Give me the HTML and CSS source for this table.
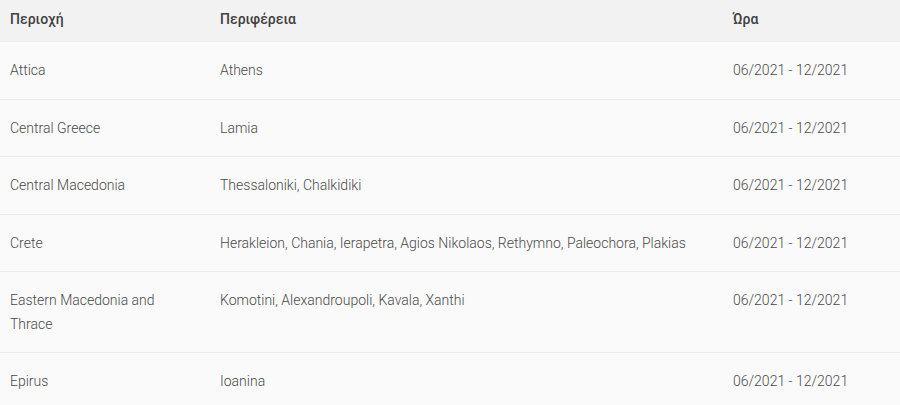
FILE: index.html
```html
<!DOCTYPE html>
<html lang="el">
<head>
<meta charset="utf-8">
<link rel="stylesheet" href="styles.css">
</head>
<body>
<table class="regions">
  <thead>
    <tr><th class="c1">Περιοχή</th><th class="c2">Περιφέρεια</th><th class="c3">Ώρα</th></tr>
  </thead>
  <tbody>
    <tr><td>Attica</td><td>Athens</td><td>06/2021 - 12/2021</td></tr>
    <tr><td>Central Greece</td><td>Lamia</td><td>06/2021 - 12/2021</td></tr>
    <tr><td>Central Macedonia</td><td>Thessaloniki, Chalkidiki</td><td>06/2021 - 12/2021</td></tr>
    <tr><td>Crete</td><td>Herakleion, Chania, Ierapetra, Agios Nikolaos, Rethymno, Paleochora, Plakias</td><td>06/2021 - 12/2021</td></tr>
    <tr><td>Eastern Macedonia and Thrace</td><td>Komotini, Alexandroupoli, Kavala, Xanthi</td><td>06/2021 - 12/2021</td></tr>
    <tr><td>Epirus</td><td>Ioanina</td><td>06/2021 - 12/2021</td></tr>
  </tbody>
</table>
</body>
</html>
```

FILE: styles.css
```css
html, body {
  margin: 0;
  padding: 0;
  background: #fafafa;
}
body {
  font-family: Roboto, "Noto Sans", sans-serif;
  width: 900px;
  overflow: hidden;
}
.regions {
  width: 900px;
  border-collapse: collapse;
  table-layout: fixed;
}
.regions th {
  background: #f2f2f2;
  color: #404040;
  font-weight: 500;
  font-size: 14px;
  text-align: left;
  height: 38px;
  padding: 0 10px 3px;
  line-height: 20px;
  border-bottom: 1px solid #ececec;
}
.regions .c1 { width: 180px; padding-right: 20px; }
.regions .c2 { width: 493px; }
.regions td {
  font-size: 14px;
  font-weight: 300;
  color: #4a4a4a;
  line-height: 23.5px;
  padding: 17px 10px 16px;
  vertical-align: top;
  border-bottom: 1px solid #ececec;
  background: #fafafa;
}
.regions td:first-child { padding-right: 20px; }
```
